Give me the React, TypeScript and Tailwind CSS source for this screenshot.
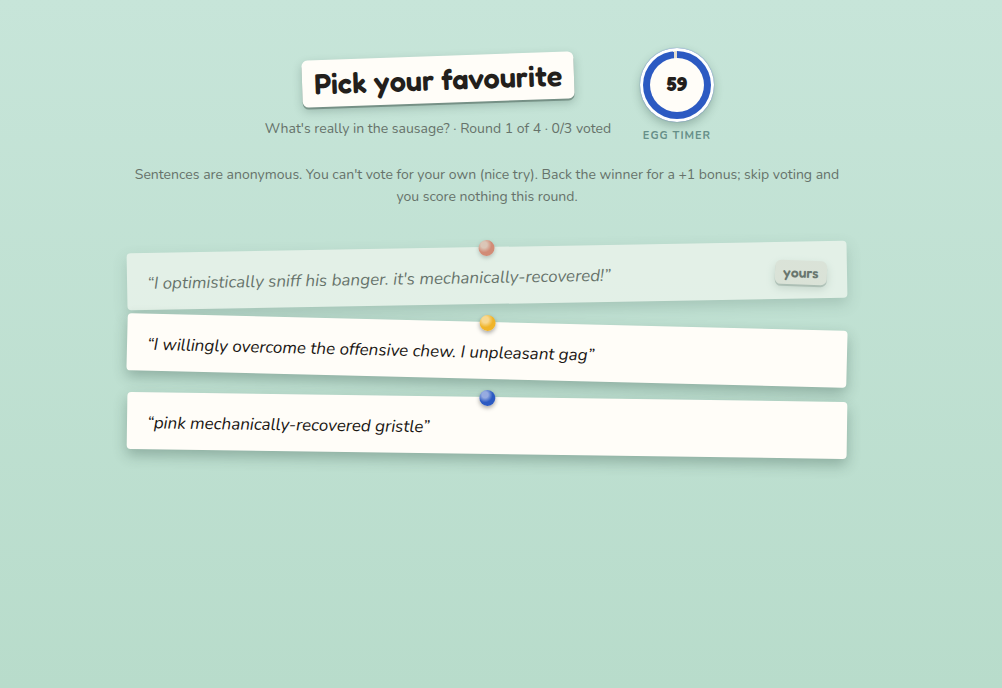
import clsx from "clsx";

type Sentence = {
  id: number;
  text: string;
  tilt: string;
  pin: string;
  own?: boolean;
};

const sentences: Sentence[] = [
  {
    id: 1,
    text: "I optimistically sniff his banger. it's mechanically-recovered!",
    tilt: "-rotate-1",
    pin: "bg-[radial-gradient(circle_at_35%_30%,#f0b0a0_0,#f0b0a0_20%,#e0452a_50%)]",
    own: true,
  },
  {
    id: 2,
    text: "I willingly overcome the offensive chew. I unpleasant gag",
    tilt: "rotate-[1.4deg]",
    pin: "bg-[radial-gradient(circle_at_35%_30%,#f8d992_0,#f8d992_20%,#f0b429_50%)]",
  },
  {
    id: 3,
    text: "pink mechanically-recovered gristle",
    tilt: "rotate-[0.8deg]",
    pin: "bg-[radial-gradient(circle_at_35%_30%,#96abe0_0,#96abe0_20%,#2c5ac2_50%)]",
  },
];

const ROUND_SECONDS = 60;

function EggTimer({ seconds }: { seconds: number }) {
  const left = (seconds / ROUND_SECONDS) * 100;

  return (
    <div className="flex flex-col items-center gap-1.5">
      <div
        role="timer"
        className="grid h-[74px] w-[74px] place-items-center rounded-full bg-white shadow-[0_4px_10px_rgba(30,60,50,0.28),0_0_1px_#2c5ac2]"
      >
        <div
          className="grid h-[68px] w-[68px] place-items-center rounded-full"
          style={{
            background: `conic-gradient(#2c5ac2 ${left}%, #e5dfcf ${left}%)`,
          }}
        >
          <div className="grid h-[54px] w-[54px] place-items-center rounded-full bg-[#fffdf8] pb-0.5 font-['Fredoka',sans-serif] text-xl leading-6 font-black text-[#231f1c]">
            {seconds}
          </div>
        </div>
      </div>
      <span className="text-[11px] leading-4 font-bold tracking-[1px] text-[#668f88]">
        EGG TIMER
      </span>
    </div>
  );
}

function SentenceCard({ sentence }: { sentence: Sentence }) {
  return (
    <button
      type="button"
      disabled={sentence.own}
      className={clsx(
        "relative flex h-[57px] w-full items-center justify-between rounded bg-[#fffdf8] px-5 pt-[5px] text-left shadow-[0_6px_14px_rgba(30,60,50,0.3)]",
        sentence.tilt,
        sentence.own && "opacity-55",
      )}
    >
      <span
        className={clsx(
          "absolute -top-[7px] left-1/2 h-4 w-4 -translate-x-1/2 rounded-full shadow-[0_2px_4px_rgba(0,0,0,0.35)]",
          sentence.pin,
        )}
      />
      <span className="text-[17px] leading-6 text-[#1a1613] italic">
        “{sentence.text}”
      </span>
      {sentence.own && (
        <span className="rotate-3 rounded-md bg-[#efe4dc] px-2 font-['Fredoka',sans-serif] text-sm leading-6 font-semibold shadow-[0_2px_0_rgba(30,50,40,0.3),0_4px_8px_rgba(30,50,40,0.25)]">
          yours
        </span>
      )}
    </button>
  );
}

export default function App() {
  return (
    <div className="min-h-screen bg-linear-to-b from-[#c7e5d9] to-[#b8dccb] pt-12 pr-7 font-['Nunito',sans-serif] text-[#231f1c]">
      <main className="mx-auto max-w-[720px]">
        <header className="flex justify-center gap-6">
          <div className="flex min-w-[356px] flex-col items-center pt-2">
            <h1 className="-rotate-2 rounded-md bg-[#fffdf8] px-3 font-['Fredoka',sans-serif] text-[29px] leading-[47px] font-semibold shadow-[0_2px_0_rgba(30,50,40,0.35),0_4px_10px_rgba(30,60,50,0.25)]">
              Pick your favourite
            </h1>
            <p className="mt-[15px] text-sm leading-[22px] text-[#66726a]">
              What's really in the sausage? · Round 1 of 4 · 0/3 voted
            </p>
          </div>
          <EggTimer seconds={59} />
        </header>

        <p className="mt-5 text-center text-sm leading-[22px] text-[#66726a]">
          Sentences are anonymous. You can't vote for your own (nice try). Back
          the winner for a +1 bonus; skip voting and you score nothing this
          round.
        </p>

        <div className="mt-[39px] flex flex-col gap-[18px]">
          {sentences.map((sentence) => (
            <SentenceCard key={sentence.id} sentence={sentence} />
          ))}
        </div>
      </main>
    </div>
  );
}
